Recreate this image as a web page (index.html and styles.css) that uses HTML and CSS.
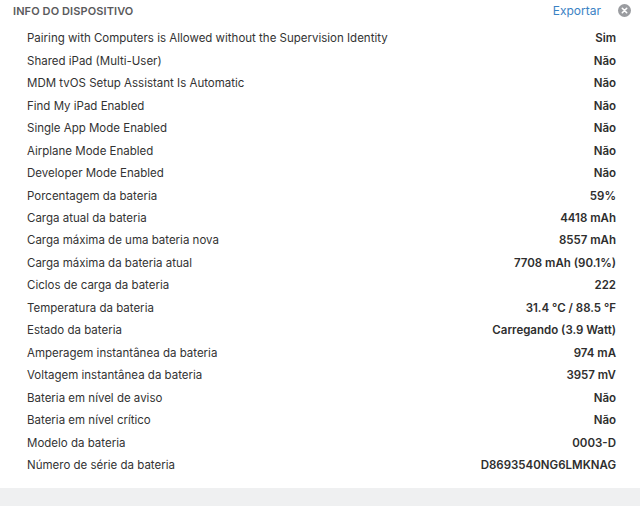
FILE: index.html
```html
<!DOCTYPE html>
<html lang="pt">
<head>
<meta charset="utf-8">
<link rel="stylesheet" href="styles.css">
</head>
<body>
<div class="panel">
  <header class="head">
    <span class="title">INFO DO DISPOSITIVO</span>
    <div class="actions">
      <span class="export">Exportar</span>
      <svg class="close" width="13" height="13" viewBox="0 0 13 13"><circle cx="6.5" cy="6.5" r="6.5" fill="#9a9ca0"/><path d="M4.3 4.3 L8.7 8.7 M8.7 4.3 L4.3 8.7" stroke="#fff" stroke-width="1.6" stroke-linecap="round"/></svg>
    </div>
  </header>
  <div class="rows">
    <div class="row"><span>Pairing with Computers is Allowed without the Supervision Identity</span><b>Sim</b></div>
    <div class="row"><span>Shared iPad (Multi-User)</span><b>Não</b></div>
    <div class="row"><span>MDM tvOS Setup Assistant Is Automatic</span><b>Não</b></div>
    <div class="row"><span>Find My iPad Enabled</span><b>Não</b></div>
    <div class="row"><span>Single App Mode Enabled</span><b>Não</b></div>
    <div class="row"><span>Airplane Mode Enabled</span><b>Não</b></div>
    <div class="row"><span>Developer Mode Enabled</span><b>Não</b></div>
    <div class="row"><span>Porcentagem da bateria</span><b>59%</b></div>
    <div class="row"><span>Carga atual da bateria</span><b>4418 mAh</b></div>
    <div class="row"><span>Carga máxima de uma bateria nova</span><b>8557 mAh</b></div>
    <div class="row"><span>Carga máxima da bateria atual</span><b>7708 mAh (90.1%)</b></div>
    <div class="row"><span>Ciclos de carga da bateria</span><b>222</b></div>
    <div class="row"><span>Temperatura da bateria</span><b>31.4 °C / 88.5 °F</b></div>
    <div class="row"><span>Estado da bateria</span><b>Carregando (3.9 Watt)</b></div>
    <div class="row"><span>Amperagem instantânea da bateria</span><b>974 mA</b></div>
    <div class="row"><span>Voltagem instantânea da bateria</span><b>3957 mV</b></div>
    <div class="row"><span>Bateria em nível de aviso</span><b>Não</b></div>
    <div class="row"><span>Bateria em nível crítico</span><b>Não</b></div>
    <div class="row"><span>Modelo da bateria</span><b>0003-D</b></div>
    <div class="row"><span>Número de série da bateria</span><b>D8693540NG6LMKNAG</b></div>
  </div>
  <div class="footer"></div>
</div>
</body>
</html>
```
FILE: styles.css
```css
html, body {
  margin: 0;
  padding: 0;
  background: #ffffff;
}
body {
  font-family: Inter, "Noto Sans", "Liberation Sans", sans-serif;
  color: #333;
  width: 640px;
  height: 506px;
  overflow: hidden;
}
.panel {
  display: flex;
  flex-direction: column;
  height: 506px;
}
.head {
  height: 21px;
  display: flex;
  align-items: center;
  justify-content: space-between;
  padding: 0 9px 0 13px;
}
.title {
  font-size: 11px;
  font-weight: 600;
  color: #5a5a5c;
  letter-spacing: 0.1px;
}
.actions {
  display: flex;
  align-items: center;
  gap: 17px;
}
.export {
  font-size: 12px;
  color: #3b82c4;
}
.close {
  display: block;
}
.rows {
  padding: 6px 24px 0 27px;
  display: flex;
  flex-direction: column;
}
.row {
  height: 22.47px;
  display: flex;
  align-items: center;
  justify-content: space-between;
  font-size: 11.5px;
}
.row span {
  color: #333;
}
.row b {
  font-weight: 600;
  color: #2e2e2e;
}
.footer {
  margin-top: auto;
  height: 18px;
  background: #eff0f1;
}
```
